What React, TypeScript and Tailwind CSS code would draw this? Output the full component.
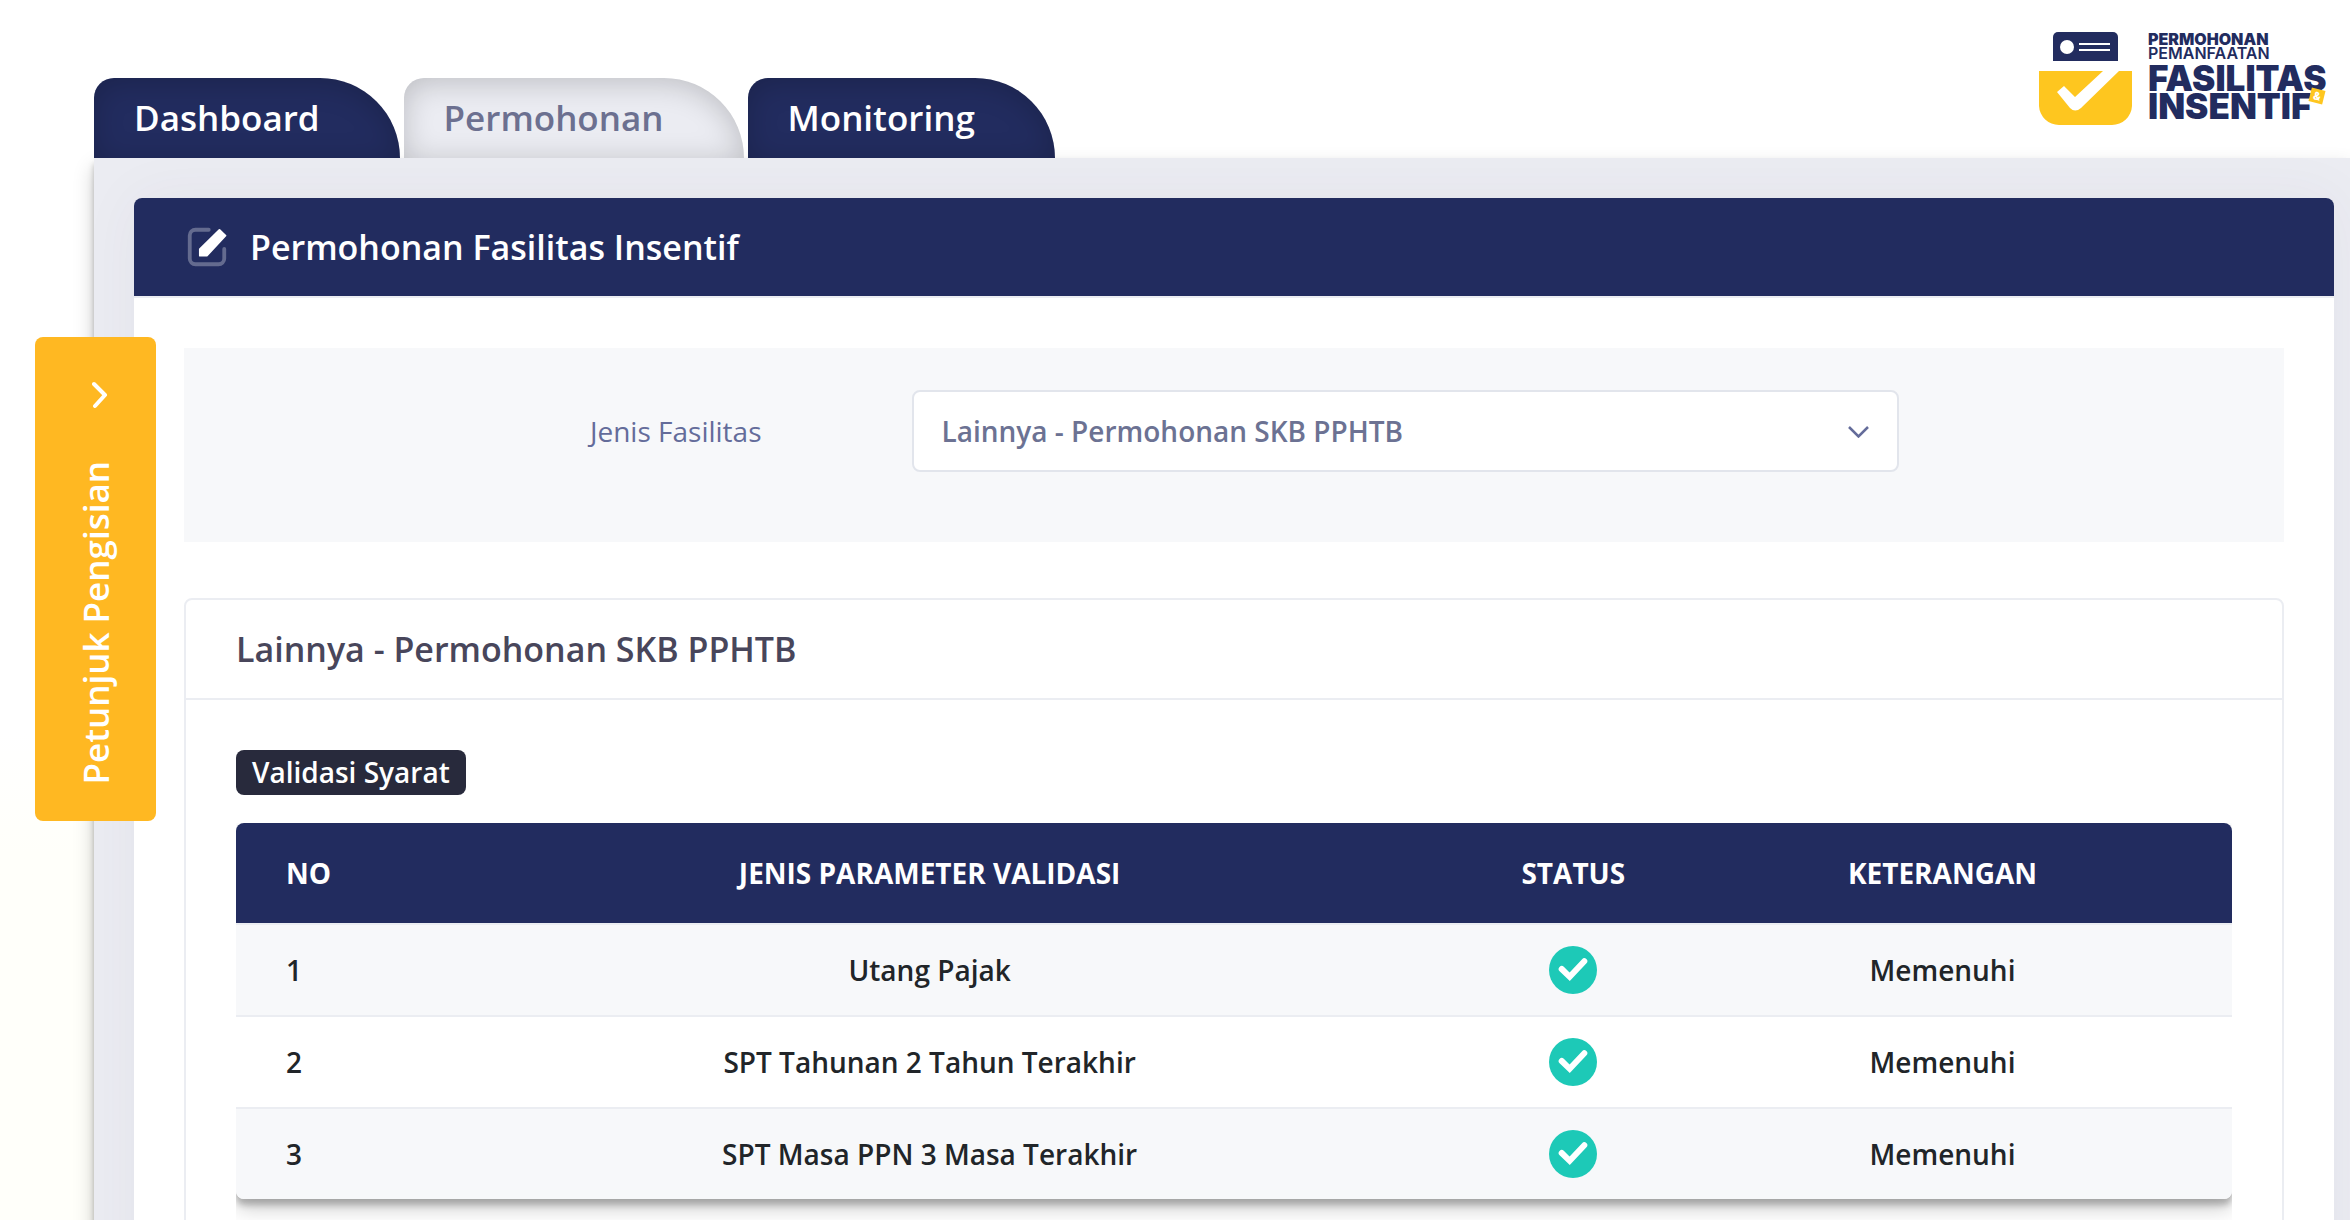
import { useState } from "react";

const facilities = ["Lainnya - Permohonan SKB PPHTB"];

const rows = [
  { no: 1, parameter: "Utang Pajak", status: "Memenuhi" },
  { no: 2, parameter: "SPT Tahunan 2 Tahun Terakhir", status: "Memenuhi" },
  { no: 3, parameter: "SPT Masa PPN 3 Masa Terakhir", status: "Memenuhi" },
];

const tabs = ["Dashboard", "Permohonan", "Monitoring"];

function Logo() {
  return (
    <svg
      role="img"
      aria-label="Permohonan Pemanfaatan Fasilitas & Insentif"
      className="h-[100px] w-[300px] shrink-0"
      viewBox="0 0 300 100"
    >
      <path d="M17 7a5 5 0 0 1 5-5h55a5 5 0 0 1 5 5v24H17z" fill="#222c5f" />
      <circle cx="31" cy="17" r="7" fill="#fff" />
      <path d="M43 14h31M43 20h31" stroke="#fff" strokeWidth="2" />
      <path d="M3 41h93v35a20 20 0 0 1-20 19H23a20 20 0 0 1-20-19z" fill="#fec61f" />
      <path d="M67 41h16L45 78q-6 5-11 0L21 62l7-6 11 11z" fill="#fff" />
      <g fill="#222c5f" fontFamily="Inter, sans-serif">
        <text x="112" y="15" fontSize="16" fontWeight="900">PERMOHONAN</text>
        <text x="112" y="29" fontSize="16" fontWeight="600">PEMANFAATAN</text>
        <text x="112" y="61" fontSize="35" fontWeight="900">FASILITAS</text>
        <text x="112" y="89" fontSize="35" fontWeight="900">INSENTIF</text>
      </g>
      <g transform="rotate(14 281 66)">
        <rect x="274" y="59" width="14" height="14" fill="#fec61f" />
        <text x="281" y="70" fontSize="11" fontWeight="800" fill="#fff" textAnchor="middle" fontFamily="Inter, sans-serif">
          &amp;
        </text>
      </g>
    </svg>
  );
}

function WriteIcon() {
  return (
    <svg className="size-[46px]" viewBox="0 0 24 24" fill="#fff" aria-hidden="true">
      <path d="M18.5 3.1 8.3 13.1v3.4h3.6L21.6 6.100z" stroke="#fff" strokeLinejoin="round" />
      <path
        opacity="0.3"
        d="M12.9 2a1 1 0 0 1 0 2H6a2 2 0 0 0-2 2v12a2 2 0 0 0 2 2h12a2 2 0 0 0 2-2v-5a1 1 0 0 1 2 0v5a4 4 0 0 1-4 4H6a4 4 0 0 1-4-4V6a4 4 0 0 1 4-4z"
      />
    </svg>
  );
}

function CheckIcon() {
  return (
    <svg className="mx-auto size-12" viewBox="0 0 48 48" fill="none" role="img" aria-label="OK">
      <circle cx="24" cy="24" r="24" fill="#1dc9b7" />
      <path d="m12.700 23 8 7.800 14.600-15.500" stroke="#fff" strokeWidth="6" strokeLinecap="round" />
    </svg>
  );
}

export default function App() {
  const [activeTab, setActiveTab] = useState("Permohonan");
  const [facility, setFacility] = useState(facilities[0]);

  return (
    <div className="relative h-screen overflow-hidden bg-linear-to-b from-white from-60% to-[#fffffa] to-70% font-['Open_Sans',sans-serif] text-[28px] leading-[42px] text-[#212529]">
      {/* Tabs and logo */}
      <header className="flex items-end justify-between pl-[94px]">
        <nav className="flex gap-1">
          {tabs.map((tab) => (
            <button
              key={tab}
              type="button"
              onClick={() => setActiveTab(tab)}
              className={`h-20 rounded-tl-[20px] rounded-tr-[80px] pr-20 pl-10 text-[35px] font-semibold cursor-pointer shadow-[inset_0_4px_30px_rgba(0,0,0,0.2)] ${
                tab === activeTab ? "bg-[#ebecf2] text-[#6c7090]" : "bg-[#222c5f] text-white"
              }`}
            >
              {tab}
            </button>
          ))}
        </nav>
        <div className="pt-[30px] pr-[14px] pb-7">
          <Logo />
        </div>
      </header>

      <main className="ml-[94px] min-h-screen bg-[#ebecf2] pt-10 pr-4 pl-10 shadow-[0_10px_20px_rgba(0,0,0,0.19),0_6px_6px_rgba(0,0,0,0.23)]">
        <section className="min-h-screen rounded-lg bg-white shadow-[0_0_60px_rgba(82,63,105,0.05)]">
          <div className="flex items-center gap-5 rounded-t-lg border-b-2 border-[#ebedf2] bg-[#222c5f] bg-clip-padding px-[50px] py-[26px]">
            <WriteIcon />
            <h1 className="text-[34px] leading-[46px] font-semibold text-white">Permohonan Fasilitas Insentif</h1>
          </div>

          <div className="px-[50px] pt-[50px]">
            {/* Facility picker */}
            <div className="flex items-center bg-[#f7f8fa] pt-[42px] pb-[70px]">
              <label htmlFor="facility" className="w-[27.5%] text-right text-[#646c9a]">
                Jenis Fasilitas
              </label>
              <div className="relative ml-[150px] w-[47%]">
                <select
                  id="facility"
                  value={facility}
                  onChange={(e) => setFacility(e.target.value)}
                  className="h-[82px] w-full appearance-none rounded-lg border-2 border-[#e2e5ec] bg-white px-7 font-semibold text-[#6c7293] outline-none"
                >
                  {facilities.map((f) => (
                    <option key={f}>{f}</option>
                  ))}
                </select>
                <svg className="pointer-events-none absolute top-9 right-[30px] h-3 w-[21px]" viewBox="0 0 21 12" fill="none" aria-hidden="true">
                  <path d="m1 1 9.500 9.500L20 1" stroke="#646c9a" strokeWidth="2.500" />
                </svg>
              </div>
            </div>

            {/* Requirement check */}
            <div className="mt-14 rounded-lg border-2 border-[#ebedf2]">
              <h2 className="border-b-2 border-[#ebedf2] px-[50px] py-[26px] text-[34px] leading-[46px] font-semibold text-[#48465b]">
                {facility}
              </h2>
              <div className="px-[50px] pt-[50px]">
                <span className="block w-fit rounded-lg bg-[#282a3c] px-4 leading-[45px] font-semibold text-white">
                  Validasi Syarat
                </span>
                <div className="mt-7 overflow-hidden pb-12">
                  <div className="overflow-hidden rounded-lg shadow-[0_10px_20px_rgba(0,0,0,0.19),0_6px_6px_rgba(0,0,0,0.23)]">
                    <table className="w-full table-fixed border-separate border-spacing-0 text-center font-semibold">
                      <thead className="bg-[#222c5f] text-white">
                        <tr className="h-[100px]">
                          <th className="w-[10.5%] pl-[50px] text-left font-bold">NO</th>
                          <th className="w-[48.5%] font-bold">JENIS PARAMETER VALIDASI</th>
                          <th className="w-[16%] font-bold">STATUS</th>
                          <th className="w-[25%] pr-20 font-bold">KETERANGAN</th>
                        </tr>
                      </thead>
                      <tbody>
                        {rows.map((row) => (
                          <tr key={row.no} className="h-[92px] bg-white odd:bg-[#f7f8fa] [&>td]:border-t-2 [&>td]:border-[#ebedf2]">
                            <td className="pl-[50px] text-left">{row.no}</td>
                            <td>{row.parameter}</td>
                            <td>
                              <CheckIcon />
                            </td>
                            <td className="pr-20">{row.status}</td>
                          </tr>
                        ))}
                      </tbody>
                    </table>
                  </div>
                </div>
              </div>
            </div>
          </div>
        </section>
      </main>

      {/* Guide drawer handle, stays over the page edge */}
      <button
        type="button"
        className="fixed top-[337px] left-[35px] flex w-[121px] cursor-pointer flex-col items-center gap-[52px] rounded-lg bg-[#ffb822] pt-11 pb-9 text-[35px] leading-[46px] font-semibold text-white"
      >
        <svg className="ml-2 h-7 w-4" viewBox="0 0 16 28" fill="none" aria-hidden="true">
          <path d="m2 3 11 11L3 25" stroke="#fff" strokeWidth="4" strokeLinecap="round" strokeLinejoin="round" />
        </svg>
        <span className="rotate-180 [writing-mode:vertical-rl]">Petunjuk Pengisian</span>
      </button>
    </div>
  );
}
